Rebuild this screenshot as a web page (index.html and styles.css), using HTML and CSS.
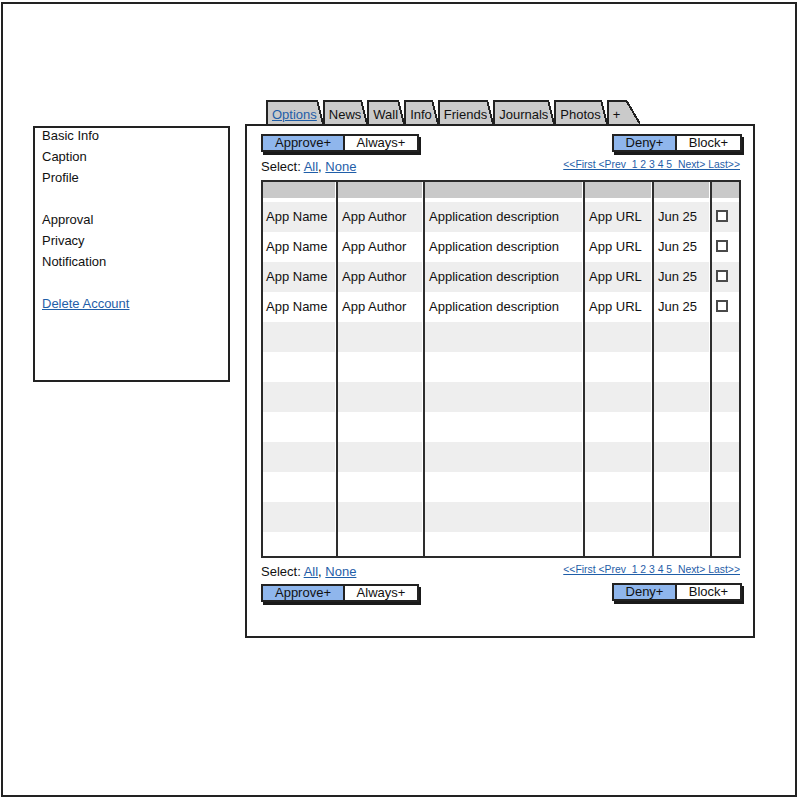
FILE: index.html
```html
<!DOCTYPE html>
<html>
<head>
<meta charset="utf-8">
<title>Settings - Applications</title>
<link rel="stylesheet" href="styles.css">
</head>
<body>
<div class="frame">
  <nav class="sidebar">
    <ul class="menu">
      <li>Basic Info</li>
      <li>Caption</li>
      <li>Profile</li>
      <li class="spacer"></li>
      <li>Approval</li>
      <li>Privacy</li>
      <li>Notification</li>
      <li class="spacer"></li>
      <li><a class="link" href="#">Delete Account</a></li>
    </ul>
  </nav>

  <main class="main">
    <div class="tabs">
      <div class="tab"><span class="tab-label"><a class="link" href="#">Options</a></span></div>
      <div class="tab"><span class="tab-label">News</span></div>
      <div class="tab"><span class="tab-label">Wall</span></div>
      <div class="tab"><span class="tab-label">Info</span></div>
      <div class="tab"><span class="tab-label">Friends</span></div>
      <div class="tab"><span class="tab-label">Journals</span></div>
      <div class="tab"><span class="tab-label">Photos</span></div>
      <div class="tab tab-plus"><span class="tab-label">+</span></div>
    </div>

    <section class="panel">
      <div class="toolbar">
        <div class="btngroup">
          <span class="btn btn-primary btn-approve">Approve+</span>
          <span class="btn btn-always">Always+</span>
        </div>
        <div class="btngroup btngroup-right">
          <span class="btn btn-primary btn-deny">Deny+</span>
          <span class="btn btn-block">Block+</span>
        </div>
      </div>

      <div class="selectrow">
        <div class="select">Select: <a class="link" href="#">All</a>, <a class="link" href="#">None</a></div>
        <a class="link pager" href="#">&lt;&lt;First &lt;Prev  1 2 3 4 5  Next&gt; Last&gt;&gt;</a>
      </div>

      <div class="grid">
        <div class="row row-head">
          <div class="cell"></div><div class="cell"></div><div class="cell"></div><div class="cell"></div><div class="cell"></div><div class="cell"></div>
        </div>
        <div class="row">
          <div class="cell">App Name</div><div class="cell">App Author</div><div class="cell">Application description</div><div class="cell">App URL</div><div class="cell">Jun 25</div><div class="cell"><span class="check"></span></div>
        </div>
        <div class="row">
          <div class="cell">App Name</div><div class="cell">App Author</div><div class="cell">Application description</div><div class="cell">App URL</div><div class="cell">Jun 25</div><div class="cell"><span class="check"></span></div>
        </div>
        <div class="row">
          <div class="cell">App Name</div><div class="cell">App Author</div><div class="cell">Application description</div><div class="cell">App URL</div><div class="cell">Jun 25</div><div class="cell"><span class="check"></span></div>
        </div>
        <div class="row">
          <div class="cell">App Name</div><div class="cell">App Author</div><div class="cell">Application description</div><div class="cell">App URL</div><div class="cell">Jun 25</div><div class="cell"><span class="check"></span></div>
        </div>
        <div class="row"><div class="cell"></div><div class="cell"></div><div class="cell"></div><div class="cell"></div><div class="cell"></div><div class="cell"></div></div>
        <div class="row"><div class="cell"></div><div class="cell"></div><div class="cell"></div><div class="cell"></div><div class="cell"></div><div class="cell"></div></div>
        <div class="row"><div class="cell"></div><div class="cell"></div><div class="cell"></div><div class="cell"></div><div class="cell"></div><div class="cell"></div></div>
        <div class="row"><div class="cell"></div><div class="cell"></div><div class="cell"></div><div class="cell"></div><div class="cell"></div><div class="cell"></div></div>
        <div class="row"><div class="cell"></div><div class="cell"></div><div class="cell"></div><div class="cell"></div><div class="cell"></div><div class="cell"></div></div>
        <div class="row"><div class="cell"></div><div class="cell"></div><div class="cell"></div><div class="cell"></div><div class="cell"></div><div class="cell"></div></div>
        <div class="row"><div class="cell"></div><div class="cell"></div><div class="cell"></div><div class="cell"></div><div class="cell"></div><div class="cell"></div></div>
        <div class="row"><div class="cell"></div><div class="cell"></div><div class="cell"></div><div class="cell"></div><div class="cell"></div><div class="cell"></div></div>
      </div>

      <div class="selectrow selectrow-bottom">
        <div class="select">Select: <a class="link" href="#">All</a>, <a class="link" href="#">None</a></div>
        <a class="link pager" href="#">&lt;&lt;First &lt;Prev  1 2 3 4 5  Next&gt; Last&gt;&gt;</a>
      </div>

      <div class="toolbar toolbar-bottom">
        <div class="btngroup">
          <span class="btn btn-primary btn-approve">Approve+</span>
          <span class="btn btn-always">Always+</span>
        </div>
        <div class="btngroup btngroup-right btngroup-raised">
          <span class="btn btn-primary btn-deny">Deny+</span>
          <span class="btn btn-block">Block+</span>
        </div>
      </div>
    </section>
  </main>
</div>
</body>
</html>
```

FILE: styles.css
```css
* { box-sizing: border-box; }

html, body {
  margin: 0;
  padding: 0;
  background: #ffffff;
}

body {
  font-family: "Liberation Sans", Arial, sans-serif;
  font-size: 13px;
  color: #111111;
}

.link {
  color: #1f5ea8;
  text-decoration: underline;
}

.frame {
  margin: 2px 0 0 1px;
  width: 796px;
  height: 795px;
  border: 2px solid #222222;
  display: flex;
  align-items: flex-start;
}

/* Sidebar */
.sidebar {
  margin: 122px 0 0 30px;
  width: 197px;
  height: 256px;
  border: 2px solid #222222;
  padding-left: 7px;
  flex-shrink: 0;
}

.menu {
  list-style: none;
  margin: -3px 0 0 0;
  padding: 0;
  line-height: 21px;
}

.menu .spacer {
  height: 21px;
}

/* Main column */
.main {
  margin: 96px 0 0 15px;
  width: 510px;
  flex-shrink: 0;
}

.tabs {
  display: flex;
  height: 24px;
  padding-left: 21px;
}

.tab {
  display: flex;
  height: 24px;
}

.tab-label {
  display: block;
  height: 24px;
  background: #cacaca;
  border-top: 2px solid #222222;
  border-left: 2px solid #222222;
  padding: 3px 0 0 4px;
  line-height: 19px;
  white-space: nowrap;
}

.tab::after {
  content: "";
  display: block;
  width: 6px;
  height: 24px;
  background: linear-gradient(to top right, #cacaca calc(50% - 1px), #222222 calc(50% - 1px), #222222 calc(50% + 1px), transparent calc(50% + 1px));
}

.tab-plus .tab-label {
  padding-right: 6px;
}

.tab-plus::after {
  width: 14px;
}

.panel {
  width: 510px;
  height: 514px;
  border: 2px solid #222222;
  padding: 8px 11px 0 14px;
}

/* Toolbars */
.toolbar {
  display: flex;
  justify-content: space-between;
  align-items: flex-start;
  height: 18px;
}

.toolbar-bottom {
  margin-top: 2px;
}

.btngroup {
  display: flex;
  height: 18px;
  border: 2px solid #222222;
  box-shadow: 2px 3px 0 #1a1a1a;
  background: #ffffff;
}

.btngroup-raised {
  margin-top: -1px;
}

.btn {
  display: block;
  height: 14px;
  line-height: 14px;
  text-align: center;
  color: #111111;
}

.btn + .btn {
  border-left: 2px solid #222222;
}

.btn-primary {
  background: #8fb6ec;
}

.btn-approve { width: 80px; }
.btn-always  { width: 74px; }
.btn-deny    { width: 61px; }
.btn-block   { width: 65px; }

/* Select row */
.selectrow {
  display: flex;
  justify-content: space-between;
  align-items: flex-start;
  height: 20px;
  margin-top: 5px;
  margin-bottom: 3px;
}

.selectrow-bottom {
  margin-top: 4px;
  margin-bottom: 0;
}

.select {
  line-height: 20px;
}

.pager {
  font-size: 10.4px;
  line-height: 16px;
  white-space: pre;
  margin-right: 2px;
}

/* Data grid */
.grid {
  width: 480px;
  height: 378px;
  border: 2px solid #2a2a2a;
  overflow: hidden;
}

.row {
  display: grid;
  grid-template-columns: 73px 87px 160px 69px 58px 29px;
  height: 30px;
  line-height: 30px;
}

.row:nth-child(even) .cell {
  background-color: #eeeeee;
}

.row-head {
  height: 20px;
}

.row-head .cell {
  background: linear-gradient(#c9c9c9 0 16px, #ffffff 16px);
}

.cell {
  padding-left: 4px;
  border-left: 2px solid #2e2e2e;
  white-space: nowrap;
  overflow: hidden;
  box-shadow: inset -1px 0 0 #ffffff;
}

.cell:first-child {
  border-left: none;
  padding-left: 3px;
}

.cell:last-child {
  box-shadow: none;
}

.check {
  display: inline-block;
  width: 12px;
  height: 12px;
  border: 2px solid #4a4a4a;
  background: #ffffff;
  vertical-align: middle;
  margin-top: -3px;
}
```
